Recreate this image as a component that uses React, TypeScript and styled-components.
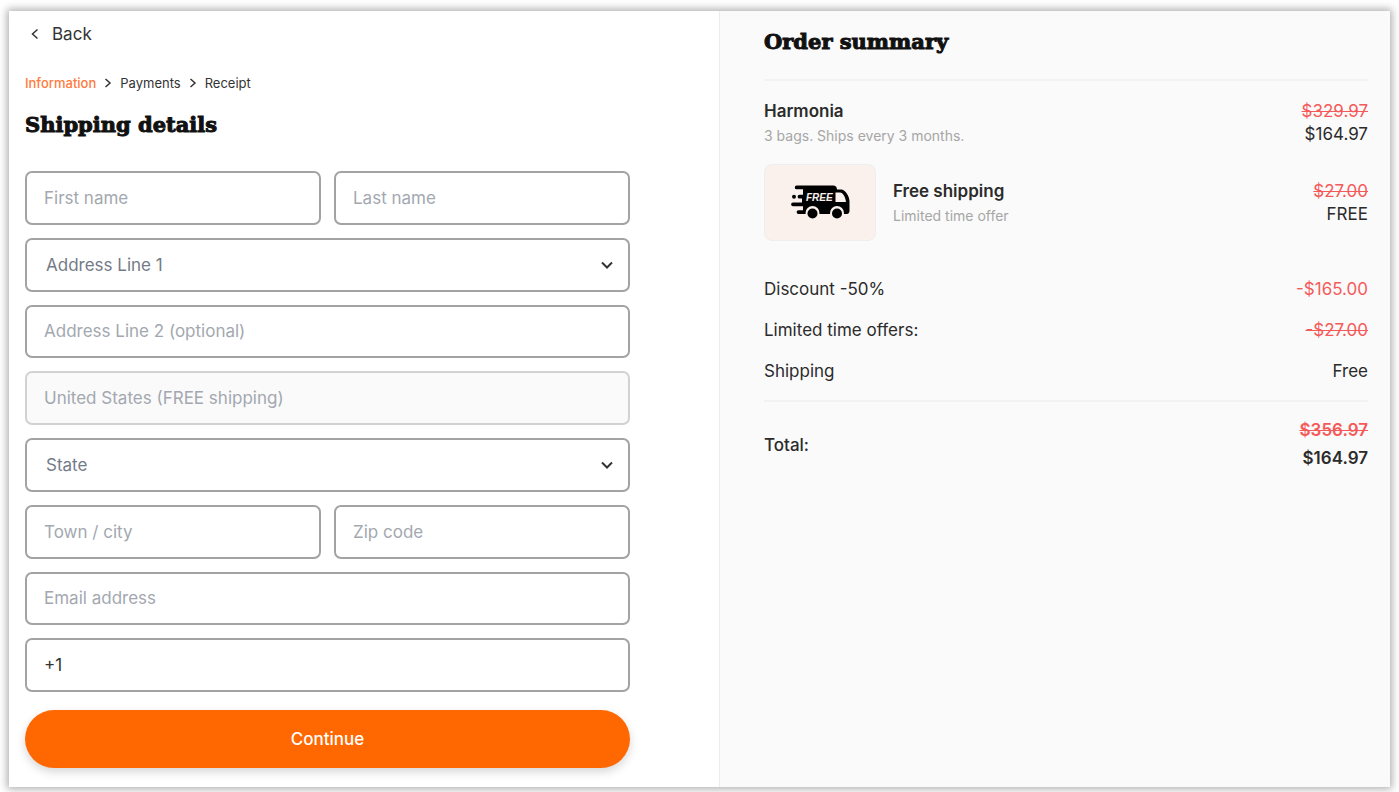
import React from "react";
import styled, { createGlobalStyle, css } from "styled-components";

const GlobalStyle = createGlobalStyle`
  *, *::before, *::after { box-sizing: border-box; }
  body {
    margin: 0;
    background: #fff;
    color: #2b2b2b;
    font-family: Inter, "Liberation Sans", sans-serif;
    font-size: 17px;
    line-height: 24px;
  }
  h1, h2, h3, p, ol, dl, dd, dt { margin: 0; padding: 0; }
  button, input, select { font: inherit; }
`;

const Page = styled.div`
  display: flex;
  min-height: 100vh;
  padding: 11px 9px 5px;
`;

const Card = styled.div`
  flex: 1;
  display: grid;
  grid-template-columns: 710fr 671fr;
  background: #fff;
  box-shadow: 0 0 8px 2px rgba(0, 0, 0, 0.32);

  @media (max-width: 800px) {
    grid-template-columns: 1fr;
  }
`;

const Checkout = styled.main`
  display: flex;
  flex-direction: column;
  padding: 11px 89px 19px 16px;
`;

const BackButton = styled.button`
  display: flex;
  align-items: center;
  align-self: flex-start;
  gap: 13px;
  padding: 0 6px;
  border: 0;
  background: none;
  color: #333;
  cursor: pointer;
`;

const Steps = styled.ol`
  display: flex;
  align-items: center;
  gap: 8px;
  margin-top: 27px;
  list-style: none;
  font-size: 13px;
  line-height: 20px;
`;

const Step = styled.li<{ $active?: boolean }>`
  display: flex;
  align-items: center;
  gap: 8px;
  color: ${(p) => (p.$active ? "#ff7a3d" : "#333")};
  font-weight: ${(p) => (p.$active ? 500 : 400)};
`;

const headingStyle = css`
  color: #111;
  font-family: "DejaVu Serif", serif;
  font-size: 21px;
  font-weight: 700;
  line-height: 32px;
  -webkit-text-stroke: 1px #111;
`;

const Title = styled.h1`
  ${headingStyle}
  margin-top: 16px;
`;

const Form = styled.form`
  flex: 1;
  display: flex;
  flex-direction: column;
  margin-top: 30px;
`;

const Fields = styled.div`
  flex: 1;
  display: grid;
  grid-template-columns: 1fr 1fr;
  grid-auto-rows: minmax(48px, 1fr);
  gap: 13px;
`;

const fieldStyle = css`
  width: 100%;
  height: 100%;
  border: 2px solid #a3a3a3;
  border-radius: 7px;
  background: #fff;
  color: #333;
`;

const Field = styled.label<{ $half?: boolean }>`
  position: relative;
  display: block;
  grid-column: ${(p) => (p.$half ? "auto" : "1 / -1")};
`;

const TextInput = styled.input`
  ${fieldStyle}
  padding: 0 17px;

  &::placeholder {
    color: #a3a8b0;
    opacity: 1;
  }

  &:disabled {
    border-color: #d2d2d2;
    background: #fafafa;
  }
`;

const Select = styled.select`
  ${fieldStyle}
  padding: 0 19px;
  appearance: none;
  color: #747b88;
`;

const SelectArrow = styled.svg`
  position: absolute;
  top: 50%;
  right: 17px;
  transform: translateY(-50%);
  pointer-events: none;
`;

const Submit = styled.button`
  height: 58px;
  margin-top: 18px;
  border: 0;
  border-radius: 29px;
  background: #ff6700;
  box-shadow: 0 4px 10px rgba(0, 0, 0, 0.16);
  color: #fff;
  font-weight: 500;
  cursor: pointer;
`;

const Summary = styled.aside`
  padding: 15px 22px 24px 44px;
  border-left: 1px solid #ececec;
  background: #fafafa;
`;

const SummaryTitle = styled.h2`
  ${headingStyle}
  padding-bottom: 21px;
  border-bottom: 2px solid #f2f2f2;
`;

const Items = styled.div`
  display: flex;
  flex-direction: column;
  gap: 16px;
  padding-top: 17px;
`;

const Item = styled.section`
  display: flex;
  align-items: center;
  gap: 17px;
`;

const ItemText = styled.div`
  flex: 1;
`;

const ItemName = styled.h3`
  font-size: 17px;
  font-weight: 600;
  line-height: 26px;
`;

const ItemNote = styled.p`
  color: #a6a6a6;
  font-size: 14px;
`;

const Thumb = styled.div`
  display: flex;
  align-items: center;
  justify-content: center;
  width: 112px;
  height: 77px;
  border: 1px solid #eeeeee;
  border-radius: 8px;
  background: #faf1ec;
`;

const Prices = styled.div<{ $total?: boolean }>`
  display: flex;
  flex-direction: column;
  align-items: flex-end;
  gap: ${(p) => (p.$total ? "5px" : "0")};
  font-weight: ${(p) => (p.$total ? 600 : 400)};
  line-height: 23px;
`;

const OldPrice = styled.s`
  color: #f55a5a;
`;

const Lines = styled.dl`
  display: flex;
  flex-direction: column;
  gap: 17px;
  margin-top: 36px;
  padding-bottom: 17px;
  border-bottom: 2px solid #f2f2f2;
`;

const Line = styled.div`
  display: flex;
  align-items: center;
  justify-content: space-between;
`;

const Discount = styled.span`
  color: #f55a5a;
`;

const Total = styled(Line)`
  margin-top: 17px;
`;

const TotalLabel = styled.span`
  font-weight: 500;
`;

const Chevron = () => (
  <svg width="8" height="10" viewBox="0 0 8 10" fill="none" stroke="#333" strokeWidth="1.5" aria-hidden="true">
    <path d="M1.5 1 6 5 1.5 9" />
  </svg>
);

const Truck = () => (
  <svg width="59" height="36" viewBox="0 0 59 36" role="img" aria-label="Free shipping truck">
    <path
      d="M5.700 0.500H42c2.500 0 4 1.500 4 4h4c4.500 0 8.500 7 8.500 12v9c0 2-1 3.500-2.500 3.500H7.500a1.900 1.900 0 0 1 0-3.800H12v-4H2a1.900 1.900 0 0 1 0-3.800h9v-3.800H8.500a1.900 1.900 0 0 1 0-3.800H12V4.300H5.700a1.900 1.900 0 0 1 0-3.800Z"
      fill="#000"
    />
    <circle cx="3" cy="11.700" r="2" fill="#000" />
    <path d="M44.500 7.500H49c3 0 5.500 5 6 9.500H44.500Z" fill="#faf1ec" />
    <circle cx="21.500" cy="28" r="7" fill="#faf1ec" />
    <circle cx="46" cy="28" r="7" fill="#faf1ec" />
    <circle cx="21.500" cy="28.500" r="5" fill="#000" />
    <circle cx="46" cy="28.500" r="5" fill="#000" />
    <text x="15" y="15.500" fill="#faf1ec" fontFamily="Liberation Sans, sans-serif" fontSize="10" fontWeight="700" fontStyle="italic">
      FREE
    </text>
  </svg>
);

type TextFieldProps = React.InputHTMLAttributes<HTMLInputElement> & { label: string; half?: boolean };

const TextField = ({ label, half, ...inputProps }: TextFieldProps) => (
  <Field $half={half}>
    <TextInput aria-label={label} placeholder={label} {...inputProps} />
  </Field>
);

const SelectField = ({ label }: { label: string }) => (
  <Field>
    <Select aria-label={label} defaultValue="">
      <option value="">{label}</option>
    </Select>
    <SelectArrow width="12" height="8" viewBox="0 0 12 8" fill="none" stroke="#333" strokeWidth="2" aria-hidden="true">
      <path d="M1 1.500 6 6.500l5-5" />
    </SelectArrow>
  </Field>
);

export default function App() {
  return (
    <>
      <GlobalStyle />
      <Page>
        <Card>
          <Checkout>
            <BackButton type="button">
              <svg width="8" height="12" viewBox="0 0 8 12" fill="none" stroke="#333" strokeWidth="1.500" aria-hidden="true">
                <path d="M6.500 1.500 1.500 6l5 4.500" />
              </svg>
              Back
            </BackButton>
            <Steps>
              <Step $active>Information</Step>
              <Step>
                <Chevron />
                Payments
              </Step>
              <Step>
                <Chevron />
                Receipt
              </Step>
            </Steps>
            <Title>Shipping details</Title>
            <Form onSubmit={(e) => e.preventDefault()}>
              <Fields>
                <TextField label="First name" half />
                <TextField label="Last name" half />
                <SelectField label="Address Line 1" />
                <TextField label="Address Line 2 (optional)" />
                <TextField label="United States (FREE shipping)" disabled />
                <SelectField label="State" />
                <TextField label="Town / city" half />
                <TextField label="Zip code" half />
                <TextField label="Email address" type="email" />
                <TextField label="Phone number" type="tel" defaultValue="+1" />
              </Fields>
              <Submit type="submit">Continue</Submit>
            </Form>
          </Checkout>
          <Summary>
            <SummaryTitle>Order summary</SummaryTitle>
            <Items>
              <Item>
                <ItemText>
                  <ItemName>Harmonia</ItemName>
                  <ItemNote>3 bags. Ships every 3 months.</ItemNote>
                </ItemText>
                <Prices>
                  <OldPrice>$329.97</OldPrice>
                  <span>$164.97</span>
                </Prices>
              </Item>
              <Item>
                <Thumb>
                  <Truck />
                </Thumb>
                <ItemText>
                  <ItemName>Free shipping</ItemName>
                  <ItemNote>Limited time offer</ItemNote>
                </ItemText>
                <Prices>
                  <OldPrice>$27.00</OldPrice>
                  <span>FREE</span>
                </Prices>
              </Item>
            </Items>
            <Lines>
              <Line>
                <dt>Discount -50%</dt>
                <dd>
                  <Discount>-$165.00</Discount>
                </dd>
              </Line>
              <Line>
                <dt>Limited time offers:</dt>
                <dd>
                  <OldPrice>-$27.00</OldPrice>
                </dd>
              </Line>
              <Line>
                <dt>Shipping</dt>
                <dd>Free</dd>
              </Line>
            </Lines>
            <Total>
              <TotalLabel>Total:</TotalLabel>
              <Prices $total>
                <OldPrice>$356.97</OldPrice>
                <span>$164.97</span>
              </Prices>
            </Total>
          </Summary>
        </Card>
      </Page>
    </>
  );
}
